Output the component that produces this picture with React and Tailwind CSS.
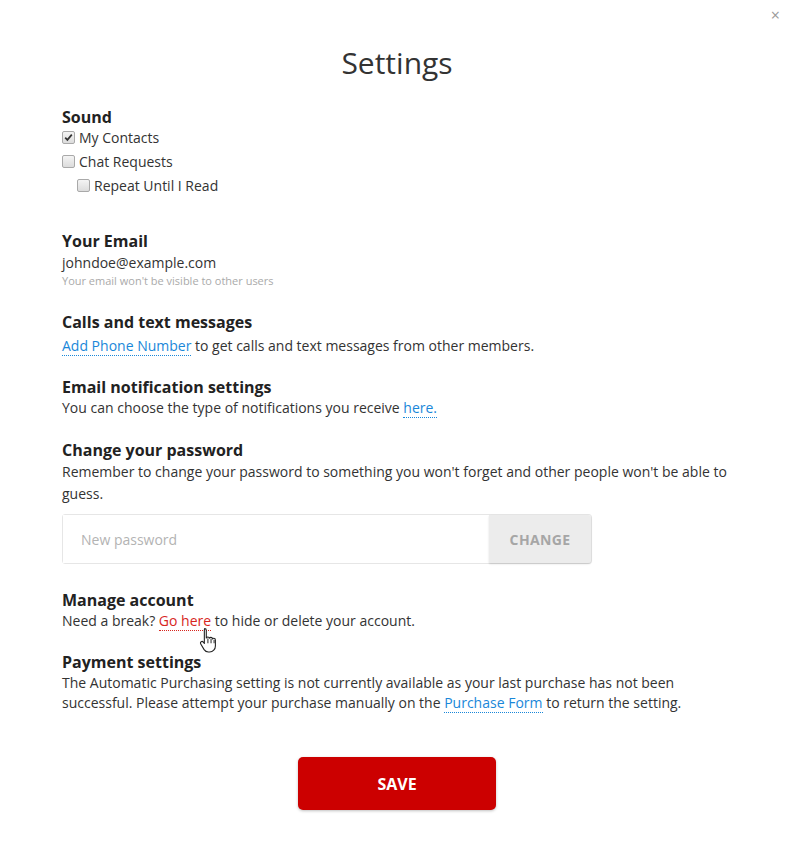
import React from 'react';

const font = { fontFamily: '"Open Sans", "Noto Sans", sans-serif' };

function Box({ checked }) {
  return (
    <span className="inline-flex items-center justify-center w-[13px] h-[13px] rounded-[2px] border border-[#a9a9a9] bg-gradient-to-b from-[#f4f4f4] to-[#dcdcdc] shrink-0">
      {checked && (
        <svg width="9" height="9" viewBox="0 0 9 9">
          <path d="M1.2 4.6 L3.4 6.9 L7.8 1.6" fill="none" stroke="#333" strokeWidth="1.7" />
        </svg>
      )}
    </span>
  );
}

function Check({ label, checked, indent }) {
  return (
    <label className={`flex items-center h-6 gap-[4px] text-[14px] text-[#333] ${indent ? 'pl-[15px]' : ''}`}>
      <Box checked={checked} />
      <span>{label}</span>
    </label>
  );
}

function Heading({ children, className = '' }) {
  return <h3 className={`text-[16px] leading-[22px] font-bold text-[#222] ${className}`}>{children}</h3>;
}

const blue = 'text-[#1a87d9] border-b border-dotted border-[#1a87d9]';

export default function App() {
  return (
    <div className="relative w-[794px] h-[852px] bg-white" style={font}>
      <button className="absolute right-[14px] top-[7px] text-[#999] text-[16px] leading-none">×</button>

      <div className="px-[62px] pt-[44px]">
        <h1 className="text-center text-[30px] leading-[38px] text-[#333]">Settings</h1>

        <Heading className="mt-[24px]">Sound</Heading>
        <div className="-mt-[3px]">
          <Check label="My Contacts" checked />
          <Check label="Chat Requests" />
          <Check label="Repeat Until I Read" indent />
        </div>

        <Heading className="mt-[33px]">Your Email</Heading>
        <p className="text-[14px] leading-[20px] text-[#333] mt-[1px]">johndoe@example.com</p>
        <p className="text-[11px] leading-[16px] text-[#aaa]">Your email won't be visible to other users</p>

        <Heading className="mt-[22px]">Calls and text messages</Heading>
        <p className="text-[14px] leading-[22px] text-[#333] mt-[2px]">
          <span className={blue}>Add Phone Number</span> to get calls and text messages from other members.
        </p>

        <Heading className="mt-[19px]">Email notification settings</Heading>
        <p className="text-[14px] leading-[20px] text-[#333]">
          You can choose the type of notifications you receive <span className={blue}>here.</span>
        </p>

        <Heading className="mt-[21px]">Change your password</Heading>
        <p className="text-[14px] leading-[22px] text-[#333]">
          Remember to change your password to something you won't forget and other people won't be able to guess.
        </p>

        <div className="flex w-[530px] h-[50px] mt-[9px] border border-[#e6e6e6] rounded-[3px]">
          <input
            type="password"
            placeholder="New password"
            className="flex-1 px-[18px] text-[14px] outline-none placeholder:text-[#b3b3b3] bg-white"
            style={font}
          />
          <button className="w-[102px] bg-[#ececec] text-[#a6a6a6] text-[14px] font-bold tracking-wide rounded-r-[3px] shadow-[0_1px_2px_rgba(0,0,0,0.15)]">
            CHANGE
          </button>
        </div>

        <Heading className="mt-[25px]">Manage account</Heading>
        <p className="relative text-[14px] leading-[20px] text-[#333]">
          Need a break?{' '}
          <span className="text-[#d7261e] border-b border-dotted border-[#d7261e]">Go here</span> to hide or delete your account.
          <svg className="absolute left-[137px] top-[16px]" width="20" height="26" viewBox="0 0 18 24">
            <path
              d="M5 1.5c.9 0 1.5.6 1.5 1.5v7.2c.3-.6.8-1 1.5-1 .8 0 1.3.5 1.4 1.2.3-.5.8-.8 1.4-.8.8 0 1.4.6 1.4 1.4.3-.4.7-.6 1.2-.6.9 0 1.5.7 1.5 1.6v5.5c0 3.2-2.300 5.5-5.3 5.5H8.4c-1.7 0-3-.8-3.9-2.1L1.4 15.6c-.5-.7-.3-1.6.4-2 .6-.4 1.4-.3 1.9.3l1 1.3V3c0-.9.2-1.5.3-1.5z"
              fill="#fff"
              stroke="#222"
              strokeWidth="1"
              strokeLinejoin="round"
            />
            <path d="M8 10.5v4.5M10.9 11v4M13.7 11.8v3.2" stroke="#222" strokeWidth="0.9" />
          </svg>
        </p>

        <Heading className="mt-[20px]">Payment settings</Heading>
        <p className="text-[14px] leading-[20px] text-[#333]">
          The Automatic Purchasing setting is not currently available as your last purchase has not been successful. Please attempt your purchase manually on the{' '}
          <span className={blue}>Purchase Form</span> to return the setting.
        </p>

        <div className="flex justify-center mt-[44px]">
          <button className="w-[198px] h-[53px] bg-[#cc0000] rounded-[5px] text-white text-[16px] font-bold shadow-[0_1px_3px_rgba(0,0,0,0.25)]">
            SAVE
          </button>
        </div>
      </div>
    </div>
  );
}
